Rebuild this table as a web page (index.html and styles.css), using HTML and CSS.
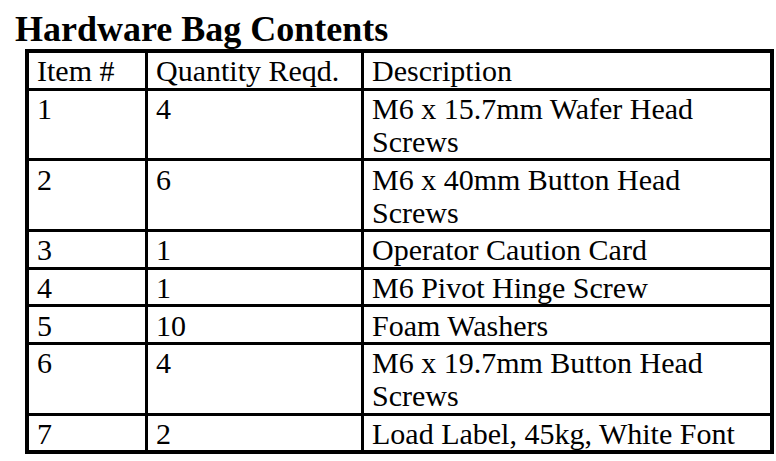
FILE: index.html
```html
<!DOCTYPE html>
<html>
<head>
<meta charset="utf-8">
<link rel="stylesheet" href="styles.css">
</head>
<body>
<div class="page">
  <h1 class="title">Hardware Bag Contents</h1>
  <table class="bag">
    <colgroup>
      <col class="c1"><col class="c2"><col class="c3">
    </colgroup>
    <tr><td>Item #</td><td>Quantity Reqd.</td><td>Description</td></tr>
    <tr><td>1</td><td>4</td><td>M6 x 15.7mm Wafer Head Screws</td></tr>
    <tr><td>2</td><td>6</td><td>M6 x 40mm Button Head Screws</td></tr>
    <tr><td>3</td><td>1</td><td>Operator Caution Card</td></tr>
    <tr><td>4</td><td>1</td><td>M6 Pivot Hinge Screw</td></tr>
    <tr><td>5</td><td>10</td><td>Foam Washers</td></tr>
    <tr><td>6</td><td>4</td><td>M6 x 19.7mm Button Head Screws</td></tr>
    <tr><td>7</td><td>2</td><td>Load Label, 45kg, White Font</td></tr>
  </table>
</div>
</body>
</html>
```
FILE: styles.css
```css
html, body {
  margin: 0;
  padding: 0;
  background: #ffffff;
}
.page {
  padding-top: 10px;
  font-family: "Liberation Serif", "Times New Roman", serif;
  color: #000;
}
.title {
  margin: 0 0 0 15px;
  font-size: 36px;
  font-weight: bold;
  line-height: 39px;
}
.bag {
  margin-left: 25px;
  border: 4px solid #000;
  border-spacing: 0;
  border-collapse: separate;
  table-layout: fixed;
  width: 749px;
  font-size: 30px;
  line-height: 33.25px;
}
.c1 { width: 119px; }
.c2 { width: 216px; }
.c3 { width: 406px; }
.bag td {
  padding: 1.3px 4px 0 8px;
  vertical-align: top;
  border-right: 3px solid #000;
  border-bottom: 3px solid #000;
}
.bag td:last-child {
  border-right: none;
}
.bag tr:last-child td {
  border-bottom: none;
}
```
